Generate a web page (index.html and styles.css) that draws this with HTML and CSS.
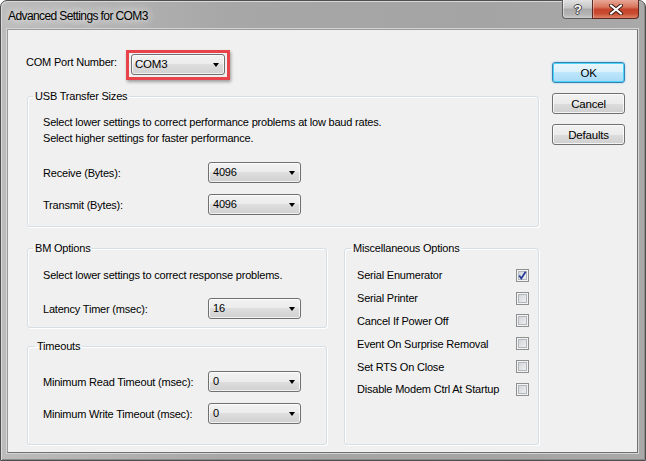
FILE: index.html
```html
<!DOCTYPE html>
<html lang="en">
<head>
    <meta charset="UTF-8">
    <title>Advanced Settings for COM3</title>
    <link rel="stylesheet" href="styles.css">
</head>
<body>
    <div class="window">
        <div class="titlebar">
            <span class="title">Advanced Settings for COM3</span>
            <div class="caption-buttons">
                <span class="cap help">?</span>
                <span class="cap close">
                    <svg width="16" height="11" viewBox="0 0 16 11">
                        <path d="M3 1.5 L13 9.5 M13 1.5 L3 9.5" stroke="#3b1b14" stroke-width="4" stroke-linecap="round"/>
                        <path d="M3 1.5 L13 9.5 M13 1.5 L3 9.5" stroke="#fff" stroke-width="2.2" stroke-linecap="round"/>
                    </svg>
                </span>
            </div>
        </div>

        <div class="client">
            <div class="main">
                <div class="port-row">
                    <span class="port-label">COM Port Number:</span>
                    <div class="highlight">
                        <div class="combo port-combo">COM3</div>
                    </div>
                </div>

                <fieldset class="group usb">
                    <legend>USB Transfer Sizes</legend>
                    <p>Select lower settings to correct performance problems at low baud rates.<br>
                       Select higher settings for faster performance.</p>
                    <div class="field">
                        <span>Receive (Bytes):</span>
                        <div class="combo">4096</div>
                    </div>
                    <div class="field">
                        <span>Transmit (Bytes):</span>
                        <div class="combo">4096</div>
                    </div>
                </fieldset>

                <div class="lower">
                    <div class="left-col">
                        <fieldset class="group bm">
                            <legend>BM Options</legend>
                            <p>Select lower settings to correct response problems.</p>
                            <div class="field">
                                <span>Latency Timer (msec):</span>
                                <div class="combo">16</div>
                            </div>
                        </fieldset>

                        <fieldset class="group timeouts">
                            <legend>Timeouts</legend>
                            <div class="field">
                                <span>Minimum Read Timeout (msec):</span>
                                <div class="combo">0</div>
                            </div>
                            <div class="field">
                                <span>Minimum Write Timeout (msec):</span>
                                <div class="combo">0</div>
                            </div>
                        </fieldset>
                    </div>

                    <fieldset class="group misc">
                        <legend>Miscellaneous Options</legend>
                        <div class="option">
                            <span>Serial Enumerator</span>
                            <span class="check checked">
                                <svg width="11" height="11" viewBox="0 0 11 11">
                                    <path d="M2.2 5.6 L4.3 8.4 L8.6 1.8" fill="none" stroke="#24399a" stroke-width="1.7"/>
                                </svg>
                            </span>
                        </div>
                        <div class="option"><span>Serial Printer</span><span class="check"></span></div>
                        <div class="option"><span>Cancel If Power Off</span><span class="check"></span></div>
                        <div class="option"><span>Event On Surprise Removal</span><span class="check"></span></div>
                        <div class="option"><span>Set RTS On Close</span><span class="check"></span></div>
                        <div class="option"><span>Disable Modem Ctrl At Startup</span><span class="check"></span></div>
                    </fieldset>
                </div>
            </div>

            <div class="buttons">
                <button class="default">OK</button>
                <button>Cancel</button>
                <button>Defaults</button>
            </div>
        </div>
    </div>
</body>
</html>
```

FILE: styles.css
```css
* {
    box-sizing: border-box;
}

html, body {
    margin: 0;
    padding: 0;
    width: 646px;
    height: 461px;
    overflow: hidden;
    background: #fff;
}

body {
    font-family: "Liberation Sans", Arial, sans-serif;
    font-size: 11px;
    letter-spacing: -0.2px;
    color: #000;
}

/* window frame */
.window {
    width: 646px;
    height: 461px;
    display: flex;
    flex-direction: column;
    padding: 0 7px 7px 6px;
    border: 1px solid #4f4f4f;
    border-radius: 7px 7px 0 0;
    background: linear-gradient(to right, #bcbcbc, #a7a7a7 35%, #a4a4a4 75%, #a9a9a9);
    box-shadow: inset 1px 1px 0 #d8d8d8, inset -1px -1px 0 #8a8a8a;
}

.titlebar {
    height: 28px;
    display: flex;
    justify-content: space-between;
    align-items: flex-start;
}

.title {
    margin-top: 8px;
    padding-left: 1px;
    font-size: 12px;
    letter-spacing: -0.6px;
    text-shadow: 0 0 6px #e6e6e6, 0 0 10px #dedede, 0 0 16px #d6d6d6;
}

.caption-buttons {
    display: flex;
    margin-top: -1px;
    margin-right: -1px;
}

.cap {
    height: 19px;
    display: flex;
    align-items: center;
    justify-content: center;
    border: 1px solid #5e5e5e;
    border-top: none;
}

.help {
    width: 30px;
    border-right: none;
    border-radius: 0 0 0 4px;
    background: linear-gradient(#e2e2e2, #c4c4c4 45%, #aaaaaa 50%, #b4b4b4 80%, #cccccc);
    color: #fff;
    font-weight: bold;
    font-size: 13px;
    text-shadow: -1px 0 #3c3c3c, 1px 0 #3c3c3c, 0 -1px #3c3c3c, 0 1px #3c3c3c;
    box-shadow: inset 1px 0 0 rgba(255, 255, 255, 0.5);
}

.close {
    width: 47px;
    border-color: #5c2a20;
    border-radius: 0 0 4px 0;
    background: linear-gradient(#e8a796, #d8745c 40%, #c6442b 52%, #c94c32 75%, #de8266);
    box-shadow: inset 1px 0 0 rgba(255, 255, 255, 0.35);
}

/* client area */
.client {
    flex: 1;
    display: flex;
    padding: 20px 0 0 19px;
    background: #f0f0f0;
    border: 1px solid;
    border-color: #9a9a9a #707070 #707070 #9a9a9a;
    box-shadow: 0 0 0 1px #d4d4d4;
}

.main {
    width: 512px;
}

.port-row {
    display: flex;
    align-items: flex-start;
}

.port-label {
    width: 100px;
    margin-left: -1px;
    margin-top: 4px;
    line-height: 16px;
}

.highlight {
    padding: 1px 2px 2px;
    border: 3px solid #e8434a;
    background: #f0f0f0;
    box-shadow: 1px 2px 3px rgba(0, 0, 0, 0.35);
}

/* dropdown lists */
.combo {
    position: relative;
    width: 93px;
    height: 21px;
    padding-left: 4px;
    line-height: 19px;
    border: 1px solid #707070;
    border-radius: 3px;
    background: linear-gradient(#f3f3f3, #ebebeb 50%, #dedede 50%, #d0d0d0);
    box-shadow: inset 0 0 0 1px rgba(255, 255, 255, 0.7);
}

.combo::after {
    content: "";
    position: absolute;
    right: 5px;
    top: 8px;
    border-left: 3.5px solid transparent;
    border-right: 3.5px solid transparent;
    border-top: 4px solid #000;
}

.port-combo {
    width: 94px;
    padding-left: 3px;
    font-size: 11.5px;
}

/* group boxes */
.group {
    margin: 0;
    border: 1px solid #d5dfe5;
    border-radius: 3px;
    box-shadow: inset 1px 1px 0 #fff, 1px 1px 0 #fff;
    min-width: 0;
}

.group legend {
    padding: 0 2px;
    margin-left: -10px;
    line-height: 14px;
}

.group p {
    margin: 0;
    line-height: 16px;
}

.field {
    display: flex;
    align-items: center;
    height: 21px;
}

.field span {
    width: 165px;
}

.usb {
    width: 512px;
    margin-top: 9px;
    padding: 11px 0 11px 15px;
}

.usb p {
    margin-bottom: 16px;
}

.usb .field + .field {
    margin-top: 11px;
}

.lower {
    display: flex;
    gap: 17px;
    margin-top: 14px;
}

.left-col {
    width: 300px;
    display: flex;
    flex-direction: column;
}

.bm {
    padding: 12px 0 8px 15px;
}

.bm p {
    margin-bottom: 15px;
}

.timeouts {
    margin-top: 11px;
    padding: 18px 0 20px 15px;
}

.timeouts legend {
    margin-left: -8px;
}

.timeouts .field + .field {
    margin-top: 11px;
}

.misc {
    width: 195px;
    padding: 9px 8px 0 12px;
}

.misc legend {
    margin-left: -6px;
}

.option {
    height: 22.8px;
    display: flex;
    align-items: center;
    justify-content: space-between;
}

/* checkboxes */
.check {
    width: 13px;
    height: 13px;
    margin-right: 1px;
    display: flex;
    align-items: center;
    justify-content: center;
    border: 1px solid #8e8f8f;
    background: linear-gradient(135deg, #cdd0d4, #f4f4f4);
    box-shadow: inset 0 0 0 1px #f4f4f4, inset 0 0 0 2px #b3b7bd;
}

/* dialog buttons */
.buttons {
    display: flex;
    flex-direction: column;
    gap: 10px;
    margin-left: 13px;
    margin-top: 12px;
}

button {
    width: 73px;
    height: 21px;
    padding: 0;
    font-family: "Liberation Sans", Arial, sans-serif;
    font-size: 11.5px;
    letter-spacing: -0.2px;
    color: #000;
    border: 1px solid #707070;
    border-radius: 3px;
    background: linear-gradient(#f2f2f2, #ebebeb 50%, #dddddd 50%, #cfcfcf);
    box-shadow: inset 0 0 0 1px rgba(255, 255, 255, 0.75);
}

button.default {
    border-color: #3c7fb1;
    background: linear-gradient(#eaf6fd, #d9f0fc 50%, #bee6fd 50%, #a7d9f5);
    box-shadow: inset 0 0 0 1px #48d7fb, 0 0 2px #7fc8ec;
}
```
